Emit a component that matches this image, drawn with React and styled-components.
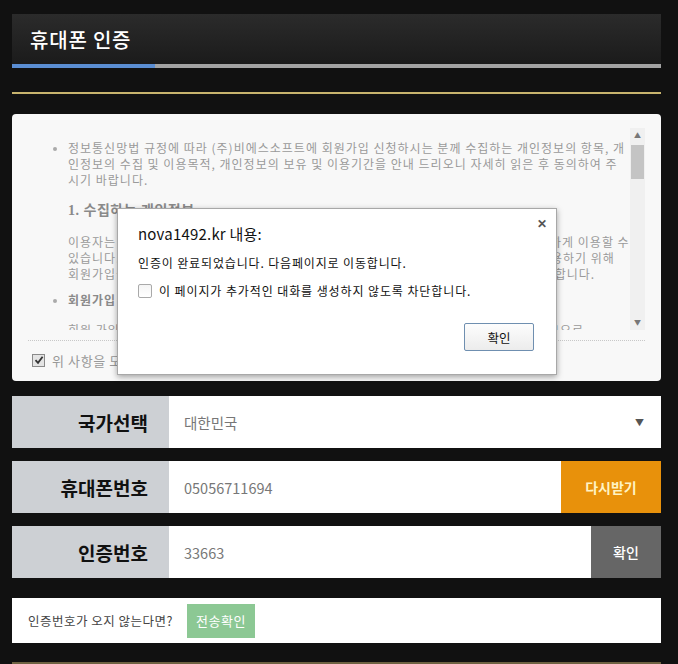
import React from 'react';
import styled, { createGlobalStyle } from 'styled-components';

const GlobalStyle = createGlobalStyle`
  html, body {
    margin: 0;
    padding: 0;
    background: #111111;
  }
  body {
    font-family: "Noto Sans CJK KR", "Noto Sans", sans-serif;
  }
`;

const rows = [
  { label: '국가선택', value: '대한민국', kind: 'select' },
  { label: '휴대폰번호', value: '05056711694', kind: 'button', button: '다시받기', tone: 'orange', width: 100 },
  { label: '인증번호', value: '33663', kind: 'button', button: '확인', tone: 'gray', width: 70 },
];

export default function App() {
  return (
    <Page>
      <GlobalStyle />
      <Header>
        <Title>휴대폰 인증</Title>
      </Header>
      <Progress>
        <ProgressFill style={{ width: '22%' }} />
      </Progress>
      <GoldLine />

      <TermsBox>
        <TermsRow>
          <TermsContent>
            <BulletList>
              <li>
                <Line>정보통신망법 규정에 따라 (주)비에스소프트에 회원가입 신청하시는 분께 수집하는 개인정보의 항목, 개</Line>
                <Line>인정보의 수집 및 이용목적, 개인정보의 보유 및 이용기간을 안내 드리오니 자세히 읽은 후 동의하여 주</Line>
                <Line>시기 바랍니다.</Line>
              </li>
            </BulletList>
            <Heading>1. 수집하는 개인정보</Heading>
            <Para>
              <Line>이용자는 회원가입을 하지 않아도 정보 검색, 뉴스 보기 등 대부분의 서비스를 회원과 동일하게 이용할 수</Line>
              <Line>있습니다. 이용자가 메일, 캘린더, 카페, 블로그 등과 같이 개인화 혹은 회원제 서비스를 이용하기 위해</Line>
              <Line>회원가입을 할 경우, 비에스소프트는 서비스 이용을 위해 필요한 최소한의 개인정보를 수집합니다.</Line>
            </Para>
            <BulletList>
              <li>
                <Line bold>회원가입 시점에 비에스소프트가 이용자로부터 수집하는 개인정보는 아래와 같습니다.</Line>
                <Line>회원 가입 시에 아이디, 비밀번호, 이름, 생년월일을 필수항목으로 입력받습니다. 다만, 하므으로</Line>
              </li>
            </BulletList>
          </TermsContent>
          <Scrollbar>
            <ScrollArrow>▲</ScrollArrow>
            <ScrollTrack>
              <ScrollThumb />
            </ScrollTrack>
            <ScrollArrow>▼</ScrollArrow>
          </Scrollbar>
        </TermsRow>
        <Divider />
        <AgreeRow>
          <CheckBox>
            <svg width="10" height="10" viewBox="0 0 10 10">
              <path d="M1.5 5.2 L4 7.8 L8.6 1.8" stroke="#333" strokeWidth="1.8" fill="none" />
            </svg>
          </CheckBox>
          <AgreeText>위 사항을 모두 읽었으며 이에 동의합니다.</AgreeText>
        </AgreeRow>
      </TermsBox>

      <Form>
        {rows.map((r) => (
          <FormRow key={r.label}>
            <Label>{r.label}</Label>
            <Value>{r.value}</Value>
            {r.kind === 'select' && <Caret>▼</Caret>}
            {r.kind === 'button' && (
              <SideButton tone={r.tone} style={{ width: r.width }}>
                {r.button}
              </SideButton>
            )}
          </FormRow>
        ))}
      </Form>

      <ResendBar>
        <ResendText>인증번호가 오지 않는다면?</ResendText>
        <GreenButton>전송확인</GreenButton>
      </ResendBar>
      <BottomLine />

      <Dialog>
        <Close>✕</Close>
        <DialogTitle>nova1492.kr 내용:</DialogTitle>
        <DialogMessage>인증이 완료되었습니다. 다음페이지로 이동합니다.</DialogMessage>
        <DialogCheck>
          <EmptyBox />
          <span>이 페이지가 추가적인 대화를 생성하지 않도록 차단합니다.</span>
        </DialogCheck>
        <DialogFooter>
          <OkButton>확인</OkButton>
        </DialogFooter>
      </Dialog>
    </Page>
  );
}

const Page = styled.div`
  position: relative;
  width: 649px;
  height: 664px;
  padding: 14px 17px 0 12px;
  overflow: hidden;
`;

const Header = styled.div`
  height: 50px;
  display: flex;
  align-items: center;
  padding: 0 0 0 18px;
  background: linear-gradient(#2b2b2b, #1b1b1b);
`;

const Title = styled.h1`
  margin: 0;
  font-size: 20px;
  font-weight: 500;
  color: #ffffff;
  letter-spacing: 0.8px;
`;

const Progress = styled.div`
  height: 4px;
  background: #a3a3a3;
`;

const ProgressFill = styled.div`
  height: 100%;
  background: #5b8ed3;
`;

const GoldLine = styled.div`
  margin-top: 24px;
  height: 2px;
  background: #c8b46e;
`;

const TermsBox = styled.div`
  margin-top: 20px;
  height: 267px;
  box-sizing: border-box;
  background: #f8f8f8;
  border-radius: 4px;
  padding: 14px 16px 0 16px;
`;

const TermsRow = styled.div`
  display: flex;
  height: 202px;
`;

const TermsContent = styled.div`
  flex: 1;
  overflow: hidden;
  padding-top: 12px;
  color: #9a9a9a;
  font-size: 12px;
  line-height: 16px;
  letter-spacing: 1px;
`;

const BulletList = styled.ul`
  margin: 0;
  padding-left: 40px;
  list-style: disc;
  li::marker {
    color: #aaa;
    font-size: 10px;
  }
`;

const Line = styled.div`
  white-space: nowrap;
  font-weight: ${(p) => (p.bold ? 700 : 400)};
  color: ${(p) => (p.bold ? '#8a8a8a' : '#9a9a9a')};
  margin-bottom: ${(p) => (p.bold ? '14px' : '0')};
`;

const Heading = styled.div`
  margin: 14px 0 0 40px;
  font-family: "Liberation Serif", "Noto Sans CJK KR", serif;
  font-size: 14px;
  font-weight: 700;
  letter-spacing: 0.5px;
  color: #8a8a8a;
  line-height: 18px;
`;

const Para = styled.div`
  margin: 14px 0 10px 40px;
`;

const Scrollbar = styled.div`
  width: 15px;
  display: flex;
  flex-direction: column;
  background: #f0f0f0;
`;

const ScrollArrow = styled.div`
  height: 15px;
  font-size: 7px;
  line-height: 15px;
  text-align: center;
  color: #777;
`;

const ScrollTrack = styled.div`
  flex: 1;
`;

const ScrollThumb = styled.div`
  margin: 2px 1px 0;
  height: 34px;
  background: #c4c4c4;
`;

const Divider = styled.div`
  margin-top: 10px;
  border-top: 1px dotted #c8c8c8;
`;

const AgreeRow = styled.div`
  height: 38px;
  display: flex;
  align-items: center;
  gap: 7px;
  padding-left: 4px;
`;

const CheckBox = styled.span`
  width: 11px;
  height: 11px;
  border: 1px solid #8a8a8a;
  background: #e4e4e4;
  display: flex;
  align-items: center;
  justify-content: center;
`;

const AgreeText = styled.span`
  font-size: 13px;
  letter-spacing: 0.6px;
  color: #999;
`;

const Form = styled.div`
  margin-top: 15px;
  display: flex;
  flex-direction: column;
  gap: 13px;
`;

const FormRow = styled.div`
  height: 52px;
  display: flex;
  align-items: stretch;
  background: #ffffff;
`;

const Label = styled.div`
  width: 157px;
  box-sizing: border-box;
  padding-right: 21px;
  background: #cdd0d4;
  display: flex;
  align-items: center;
  justify-content: flex-end;
  font-size: 19px;
  font-weight: 700;
  color: #111;
`;

const Value = styled.div`
  flex: 1;
  display: flex;
  align-items: center;
  padding-left: 15px;
  font-size: 14.5px;
  color: #777;
`;

const Caret = styled.div`
  width: 26px;
  display: flex;
  align-items: center;
  font-size: 9px;
  color: #555;
`;

const SideButton = styled.div`
  display: flex;
  align-items: center;
  justify-content: center;
  font-size: 14px;
  font-weight: ${(p) => (p.tone === 'orange' ? 700 : 500)};
  background: ${(p) => (p.tone === 'orange' ? '#e8910b' : '#666666')};
  color: ${(p) => (p.tone === 'orange' ? '#fff3c4' : '#ffffff')};
`;

const ResendBar = styled.div`
  margin-top: 20px;
  height: 45px;
  background: #ffffff;
  display: flex;
  align-items: center;
  gap: 14px;
  padding-left: 16px;
`;

const ResendText = styled.span`
  font-size: 12.5px;
  letter-spacing: 0.5px;
  color: #444;
`;

const GreenButton = styled.div`
  width: 68px;
  height: 34px;
  background: #8cc894;
  color: #ffffff;
  font-size: 13px;
  letter-spacing: 0.5px;
  display: flex;
  align-items: center;
  justify-content: center;
`;

const BottomLine = styled.div`
  margin-top: 19px;
  height: 2px;
  background: #6e6242;
`;

const Dialog = styled.div`
  position: absolute;
  left: 117px;
  top: 208px;
  width: 440px;
  height: 167px;
  box-sizing: border-box;
  background: #ffffff;
  border: 1px solid #a8a8a8;
  box-shadow: 0 2px 6px rgba(0, 0, 0, 0.35);
  padding: 14px 20px 0 20px;
  color: #111;
  display: flex;
  flex-direction: column;
`;

const Close = styled.div`
  position: absolute;
  right: 9px;
  top: 5px;
  font-size: 12px;
  font-weight: 700;
  color: #555;
`;

const DialogTitle = styled.div`
  font-size: 15px;
  line-height: 22px;
  letter-spacing: 0.2px;
`;

const DialogMessage = styled.div`
  margin-top: 9px;
  font-size: 12px;
  letter-spacing: 0.85px;
`;

const DialogCheck = styled.div`
  margin-top: 11px;
  display: flex;
  align-items: center;
  gap: 7px;
  font-size: 12px;
  letter-spacing: 0.9px;
`;

const EmptyBox = styled.span`
  width: 12px;
  height: 12px;
  border: 1px solid #a9a9a9;
  border-radius: 2px;
  background: linear-gradient(#f4f4f4, #ffffff);
`;

const DialogFooter = styled.div`
  margin-top: 24px;
  display: flex;
  justify-content: flex-end;
  padding-right: 2px;
`;

const OkButton = styled.div`
  width: 68px;
  height: 26px;
  border: 1px solid #6f8fb0;
  border-radius: 2px;
  background: linear-gradient(#fdfdfd, #ececec);
  display: flex;
  align-items: center;
  justify-content: center;
  font-size: 12.5px;
`;
